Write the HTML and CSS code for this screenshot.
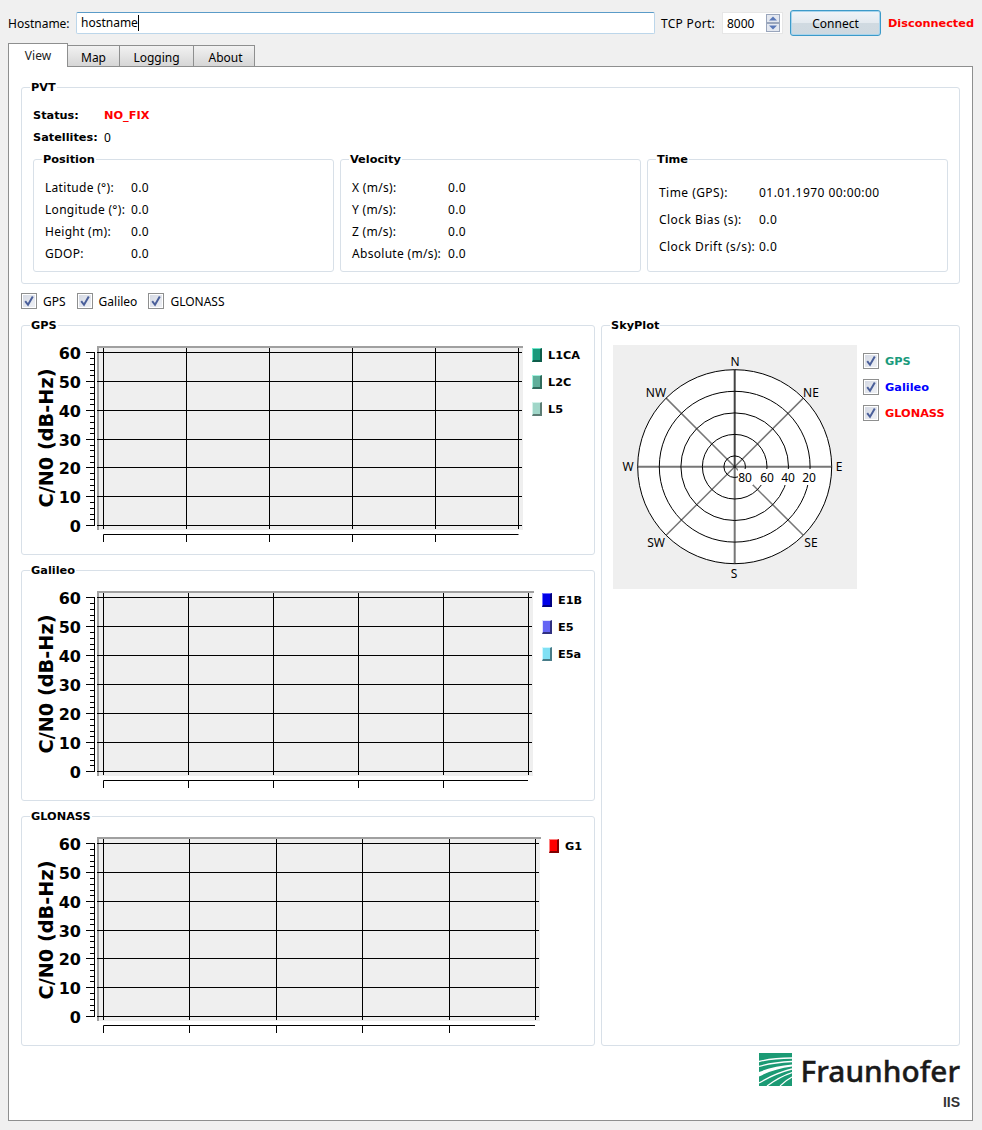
FILE: index.html
```html
<!DOCTYPE html>
<html lang="en">
<head>
<meta charset="utf-8">
<title>GNSS Monitor</title>
<link rel="stylesheet" href="styles.css">
</head>
<body>
<header class="topbar">
  <label class="host-label">Hostname:</label>
  <div class="text-input"><span>hostname</span><i class="caret"></i></div>
  <label class="port-label">TCP Port:</label>
  <div class="spin">
    <span>8000</span>
    <div class="spin-btns">
      <svg width="14" height="18" viewBox="0 0 14 18"><rect x="0.5" y="0.5" width="13" height="8" fill="#e4e8f0" stroke="#9aa6bc"/><rect x="0.5" y="9.5" width="13" height="8" fill="#e4e8f0" stroke="#9aa6bc"/><path d="M7 2.5l4 4H3z" fill="#5a78b8"/><path d="M7 15.5l4-4H3z" fill="#5a78b8"/></svg>
    </div>
  </div>
  <button class="connect">Connect</button>
  <strong class="conn-state">Disconnected</strong>
</header>

<nav class="tabs">
  <div class="tab active">View</div>
  <div class="tab tab-map">Map</div>
  <div class="tab tab-log">Logging</div>
  <div class="tab tab-about">About</div>
</nav>

<main class="pane">
  <fieldset class="group pvt">
    <legend>PVT</legend>
    <div class="status-grid">
      <b>Status:</b><b class="red">NO_FIX</b>
      <b>Satellites:</b><span>0</span>
    </div>
    <div class="pvt-cols">
      <fieldset class="group">
        <legend>Position</legend>
        <div class="kv kv-pos">
          <span>Latitude (°):</span><span>0.0</span>
          <span>Longitude (°):</span><span>0.0</span>
          <span>Height (m):</span><span>0.0</span>
          <span>GDOP:</span><span>0.0</span>
        </div>
      </fieldset>
      <fieldset class="group">
        <legend>Velocity</legend>
        <div class="kv kv-vel">
          <span>X (m/s):</span><span>0.0</span>
          <span>Y (m/s):</span><span>0.0</span>
          <span>Z (m/s):</span><span>0.0</span>
          <span>Absolute (m/s):</span><span>0.0</span>
        </div>
      </fieldset>
      <fieldset class="group">
        <legend>Time</legend>
        <div class="kv kv-time">
          <span>Time (GPS):</span><span>01.01.1970 00:00:00</span>
          <span>Clock Bias (s):</span><span>0.0</span>
          <span>Clock Drift (s/s):</span><span>0.0</span>
        </div>
      </fieldset>
    </div>
  </fieldset>

  <div class="checks">
    <div class="check"><svg class="cb" viewBox="0 0 16 16"><use href="#cb"/></svg><span>GPS</span></div>
    <div class="check"><svg class="cb" viewBox="0 0 16 16"><use href="#cb"/></svg><span>Galileo</span></div>
    <div class="check"><svg class="cb" viewBox="0 0 16 16"><use href="#cb"/></svg><span>GLONASS</span></div>
  </div>

  <div class="charts">
    <div class="chart-col">
      <fieldset class="group chart-group">
        <legend>GPS</legend>
        <div class="chart">
          <svg class="plot plot-gps" viewBox="22 332 510 222">
            <rect x="97" y="346" width="426" height="184" fill="#efefef"/>
            <path d="M97 347H523M98 346V530" stroke="#a0a0a0" stroke-width="2" fill="none"/>
            <path d="M97 352.5H522M97 381.5H522M97 410.5H522M97 439.5H522M97 467.5H522M97 496.5H522M97 525.5H522" stroke="#000"/>
            <path d="M103.5 348V529M186.5 348V529M269.5 348V529M352.5 348V529M435.5 348V529M518.5 348V529" stroke="#000"/>
            <path d="M103.500 542V534.500H518.500M186.500 534V542M269.500 534V542M352.500 534V542M435.500 534V542" stroke="#000" fill="none"/>
            <path d="M94.500 352V526M86 352.500H95M86 381.500H95M86 410.500H95M86 439.500H95M86 467.500H95M86 496.500H95M86 525.500H95M90 358.500H95M90 364.500H95M90 370.500H95M90 375.500H95M90 387.500H95M90 393.500H95M90 399.500H95M90 404.500H95M90 416.500H95M90 422.500H95M90 428.500H95M90 433.500H95M90 445.500H95M90 450.500H95M90 456.500H95M90 462.500H95M90 473.500H95M90 479.500H95M90 485.500H95M90 490.500H95M90 502.500H95M90 508.500H95M90 514.500H95M90 519.500H95" stroke="#000" fill="none"/>
            <g class="ticks"><text x="81" y="359">60</text><text x="81" y="388">50</text><text x="81" y="417">40</text><text x="81" y="446">30</text><text x="81" y="474">20</text><text x="81" y="503">10</text><text x="81" y="532">0</text></g>
            <text class="axis-title" transform="translate(53 438) rotate(-90)">C/N0 (dB-Hz)</text>
          </svg>
          <ul class="legend-list">
            <li><i class="sw sw-l1ca"></i><span>L1CA</span></li>
            <li><i class="sw sw-l2c"></i><span>L2C</span></li>
            <li><i class="sw sw-l5"></i><span>L5</span></li>
          </ul>
        </div>
      </fieldset>
      <fieldset class="group chart-group chart-group-tall">
        <legend>Galileo</legend>
        <div class="chart">
          <svg class="plot plot-gal" viewBox="22 577 520 222">
            <rect x="97" y="591" width="436" height="185" fill="#efefef"/>
            <path d="M97 592H534M98 591V776" stroke="#a0a0a0" stroke-width="2" fill="none"/>
            <path d="M97 597.500H532M97 626.500H532M97 655.500H532M97 684.500H532M97 713.500H532M97 742.500H532M97 771.500H532" stroke="#000"/>
            <path d="M103.500 593V775M188.500 593V775M273.500 593V775M358.500 593V775M443.500 593V775M528.500 593V775" stroke="#000"/>
            <path d="M103.500 788V780.500H528M188.500 780V788M273.500 780V788M358.500 780V788M443.500 780V788" stroke="#000" fill="none"/>
            <path d="M94.500 597V772M86 597.500H95M86 626.500H95M86 655.500H95M86 684.500H95M86 713.500H95M86 742.500H95M86 771.500H95M90 603.500H95M90 609.500H95M90 615.500H95M90 620.500H95M90 632.500H95M90 638.500H95M90 644.500H95M90 649.500H95M90 661.500H95M90 667.500H95M90 673.500H95M90 678.500H95M90 690.500H95M90 696.500H95M90 702.500H95M90 707.500H95M90 719.500H95M90 725.500H95M90 731.500H95M90 736.500H95M90 748.500H95M90 754.500H95M90 760.500H95M90 765.500H95" stroke="#000" fill="none"/>
            <g class="ticks"><text x="81" y="604">60</text><text x="81" y="633">50</text><text x="81" y="662">40</text><text x="81" y="691">30</text><text x="81" y="720">20</text><text x="81" y="749">10</text><text x="81" y="778">0</text></g>
            <text class="axis-title" transform="translate(53 684) rotate(-90)">C/N0 (dB-Hz)</text>
          </svg>
          <ul class="legend-list">
            <li><i class="sw sw-e1b"></i><span>E1B</span></li>
            <li><i class="sw sw-e5"></i><span>E5</span></li>
            <li><i class="sw sw-e5a"></i><span>E5a</span></li>
          </ul>
        </div>
      </fieldset>
      <fieldset class="group chart-group">
        <legend>GLONASS</legend>
        <div class="chart">
          <svg class="plot plot-glo" viewBox="22 823 527 221">
            <rect x="97" y="837" width="443" height="184" fill="#efefef"/>
            <path d="M97 838H541M98 837V1021" stroke="#a0a0a0" stroke-width="2" fill="none"/>
            <path d="M97 843.500H539M97 872.500H539M97 901.500H539M97 930.500H539M97 958.500H539M97 987.500H539M97 1016.500H539" stroke="#000"/>
            <path d="M103.500 839V1020M189.500 839V1020M276.500 839V1020M362.500 839V1020M449.500 839V1020M535.500 839V1020" stroke="#000"/>
            <path d="M103.500 1033V1025.500H535M189.500 1025V1033M276.500 1025V1033M362.500 1025V1033M449.500 1025V1033" stroke="#000" fill="none"/>
            <path d="M94.500 843V1017M86 843.500H95M86 872.500H95M86 901.500H95M86 930.500H95M86 958.500H95M86 987.500H95M86 1016.500H95M90 849.500H95M90 855.500H95M90 861.500H95M90 866.500H95M90 878.500H95M90 884.500H95M90 890.500H95M90 895.500H95M90 907.500H95M90 913.500H95M90 919.500H95M90 924.500H95M90 936.500H95M90 941.500H95M90 947.500H95M90 953.500H95M90 964.500H95M90 970.500H95M90 976.500H95M90 981.500H95M90 993.500H95M90 999.500H95M90 1005.500H95M90 1010.500H95" stroke="#000" fill="none"/>
            <g class="ticks"><text x="81" y="850">60</text><text x="81" y="879">50</text><text x="81" y="908">40</text><text x="81" y="937">30</text><text x="81" y="965">20</text><text x="81" y="994">10</text><text x="81" y="1023">0</text></g>
            <text class="axis-title" transform="translate(53 930) rotate(-90)">C/N0 (dB-Hz)</text>
          </svg>
          <ul class="legend-list">
            <li><i class="sw sw-g1"></i><span>G1</span></li>
          </ul>
        </div>
      </fieldset>
    </div>

    <fieldset class="group sky-group">
      <legend>SkyPlot</legend>
      <div class="sky-wrap">
        <svg class="sky" viewBox="613 345 244 244">
          <rect x="613" y="345" width="244" height="244" fill="#efefef"/>
          <circle cx="734.700" cy="466.700" r="97" fill="#fff"/>
          <g stroke="#777" stroke-width="1.500">
            <path d="M734.700 466.700L666.100 398.100M734.700 466.700L803.300 398.100M734.700 466.700L666.100 535.300M734.700 466.700L803.300 535.300"/>
            <path d="M637.700 466.700H831.700M734.700 466.700V563.700" stroke-width="2"/>
          </g>
          <path d="M734.700 369.700V466.700" stroke="#444" stroke-width="2"/>
          <g fill="none" stroke="#000" stroke-width="1">
            <circle cx="734.700" cy="466.700" r="97"/>
            <circle cx="734.700" cy="466.700" r="75.400"/>
            <circle cx="734.700" cy="466.700" r="53.800"/>
            <circle cx="734.700" cy="466.700" r="32.300"/>
            <circle cx="734.700" cy="466.700" r="10.800"/>
          </g>
          <circle cx="734.700" cy="466.700" r="1.500" fill="#222"/>
          <g fill="#fff"><rect x="738" y="469" width="15" height="16"/><rect x="759" y="469" width="16" height="16"/><rect x="780" y="469" width="16" height="16"/><rect x="802" y="469" width="15" height="16"/></g>
          <g class="sky-text">
            <text x="745" y="482">80</text><text x="767" y="482">60</text><text x="788" y="482">40</text><text x="809" y="482">20</text>
            <text x="735" y="366">N</text><text x="811" y="397">NE</text><text x="839" y="471">E</text><text x="811" y="547">SE</text>
            <text x="734" y="578">S</text><text x="656" y="547">SW</text><text x="628" y="471">W</text><text x="656" y="397">NW</text>
          </g>
        </svg>
        <div class="sky-checks">
          <div class="check"><svg class="cb" viewBox="0 0 16 16"><use href="#cb"/></svg><b class="c-gps">GPS</b></div>
          <div class="check"><svg class="cb" viewBox="0 0 16 16"><use href="#cb"/></svg><b class="c-gal">Galileo</b></div>
          <div class="check"><svg class="cb" viewBox="0 0 16 16"><use href="#cb"/></svg><b class="c-glo">GLONASS</b></div>
        </div>
      </div>
    </fieldset>
  </div>

  <footer class="logo">
    <div class="logo-main">
      <svg class="logo-mark" viewBox="0 0 33 33">
        <rect width="33" height="33" fill="#1b9a74"/>
        <path d="M0 8.500C10 6 21 5 33 5" stroke="#fff" stroke-width="1.300" fill="none"/>
        <path d="M0 13.500C10 10.500 21 9 33 8.500" stroke="#fff" stroke-width="1.300" fill="none"/>
        <path d="M0 19C10 15 21 12.500 33 11.500V13.500C21 15 10 18.500 0 23.500Z" fill="#fff"/>
        <path d="M0 30C10 24 21 19 33 16" stroke="#fff" stroke-width="1.300" fill="none"/>
        <path d="M8 33C16 27 24 22.500 33 19.500" stroke="#fff" stroke-width="1.300" fill="none"/>
        <path d="M21 33C25 29 29 26 33 24" stroke="#fff" stroke-width="1.200" fill="none"/>
      </svg>
      <span class="logo-name">Fraunhofer</span>
    </div>
    <span class="logo-iis">IIS</span>
  </footer>
</main>

<svg class="defs" width="0" height="0">
  <defs>
    <linearGradient id="cbg" x1="0" y1="0" x2="1" y2="1"><stop offset="0" stop-color="#d6dae4"/><stop offset="1" stop-color="#eef0f5"/></linearGradient>
    <g id="cb">
      <rect x="0.500" y="0.500" width="15" height="15" fill="#fff" stroke="#8e8f8f"/>
      <rect x="2" y="2" width="12" height="12" fill="url(#cbg)"/>
      <path d="M4.200 8.200L7 11.800L11.800 3.600" fill="none" stroke="#4a5f9a" stroke-width="2"/>
    </g>
  </defs>
</svg>
</body>
</html>
```
FILE: styles.css
```css
* { box-sizing: border-box; }
html, body { margin: 0; padding: 0; }
body {
  width: 982px;
  height: 1130px;
  overflow: hidden;
  background: #f0f0f0;
  color: #000;
  font: 12px/14px "Noto Sans", "Liberation Sans", sans-serif;
}
b, strong, legend {
  font-family: "DejaVu Sans", sans-serif;
  font-size: 11.3px;
  font-weight: 700;
}
.topbar {
  display: flex;
  align-items: center;
  height: 26px;
  margin-top: 10px;
  padding: 0 8px;
}
.host-label { width: 68px; padding-top: 2px; }
.text-input {
  display: flex;
  align-items: center;
  width: 579px;
  height: 22px;
  padding-left: 4px;
  background: #fff;
  border: 1px solid #bcd6ea;
  border-top-color: #5a9bc8;
  border-radius: 2px;
}
.caret { width: 1px; height: 16px; background: #000; }
.port-label { margin-left: 6px; width: 61px; padding-top: 2px; letter-spacing: 0.3px; white-space: nowrap; }
.spin {
  display: flex;
  align-items: center;
  justify-content: space-between;
  width: 61px;
  height: 22px;
  padding: 0 2px 0 4px;
  background: #fff;
  border: 1px solid #e6e6e6;
}
.spin > span { padding-top: 2px; }
.spin-btns { display: flex; }
.connect {
  width: 91px;
  height: 26px;
  margin-left: 7px;
  padding: 2px 0 0;
  color: #000;
  font: inherit;
  border: 1px solid #3c9ac9;
  border-radius: 3px;
  background: linear-gradient(#f0f4f8 0, #e4eaef 48%, #d0dae1 52%, #cfd9e0 100%);
  box-shadow: inset 0 0 0 1px #a8d4ec;
}
.conn-state { margin-left: 7px; color: #f00; white-space: nowrap; padding-top: 1px; }
.red { color: #f00; }

.tabs {
  display: flex;
  align-items: flex-end;
  height: 24px;
  margin: 7px 0 -1px 8px;
  position: relative;
  z-index: 1;
}
.tab {
  height: 22px;
  text-align: center;
  line-height: 24px;
  border: 1px solid #8e8f8f;
  border-left-width: 0;
  background: linear-gradient(#f2f2f2, #d6d6d6);
}
.tab.active {
  width: 60px;
  height: 24px;
  line-height: 24px;
  border-left-width: 1px;
  border-bottom: 0;
  background: #fff;
  color: #222;
}
.tab-map { width: 52px; }
.tab-log { width: 74px; }
.tab-about { width: 61px; padding-left: 3px; }

.pane {
  display: flex;
  flex-direction: column;
  width: 965px;
  height: 1055px;
  margin-left: 8px;
  padding: 13px 12px 0;
  background: #fff;
  border: 1px solid #8e8f8f;
}
.group {
  min-width: 0;
  margin: 0;
  padding: 0;
  border: 1px solid #d8e0e8;
  border-radius: 3px;
}
.group > legend {
  height: 14px;
  margin-left: 8px;
  padding: 0 1px;
  line-height: 15px;
}
.pvt > legend, .pvt-cols .group > legend { margin-left: -3px; }
.pvt { height: 204px; padding: 0 11px; }
.status-grid {
  display: grid;
  grid-template-columns: 71px auto;
  grid-auto-rows: 22px;
  align-items: center;
  justify-content: start;
  margin-top: 10px;
}
.status-grid > * { padding-top: 2px; }
.pvt-cols {
  display: grid;
  grid-template-columns: repeat(3, 301px);
  gap: 6px;
  margin-top: 4px;
}
.pvt-cols .group { height: 120px; padding: 0 11px; }
.kv {
  display: grid;
  grid-auto-rows: 22px;
  align-items: center;
  margin-top: 10px;
  letter-spacing: 0.3px;
  white-space: nowrap;
}
.kv > span { padding-top: 2px; }
.kv-pos { grid-template-columns: 86px auto; }
.kv-vel { grid-template-columns: 96px auto; }
.kv-time { grid-template-columns: 100px auto; grid-auto-rows: 27px; margin-top: 12px; letter-spacing: 0.45px; }

.checks {
  display: flex;
  gap: 11px;
  height: 16px;
  margin-top: 9px;
}
.check { display: flex; align-items: center; gap: 6px; }
.check > span, .check > b { padding-top: 2px; }
.cb { display: block; width: 16px; height: 16px; flex: none; }

.charts {
  display: grid;
  grid-template-columns: 574px 359px;
  gap: 6px;
  margin-top: 9px;
}
.chart-col { display: flex; flex-direction: column; gap: 8px; }
.chart-group { height: 237px; }
.chart-group-tall { height: 238px; }
.chart { display: flex; }
.plot { display: block; height: 222px; flex: none; }
.plot-gps { width: 510px; height: 222px; }
.plot-gal { width: 520px; }
.plot-glo { width: 527px; height: 221px; }
.ticks text {
  font: 700 16px "DejaVu Sans", sans-serif;
  text-anchor: end;
}
.axis-title {
  font: 700 19.300px "DejaVu Sans", sans-serif;
  text-anchor: middle;
}
.legend-list {
  list-style: none;
  margin: 0;
  padding: 16px 0 0;
  font-family: "DejaVu Sans", sans-serif;
  font-size: 11.3px;
  font-weight: 700;
}
.legend-list li {
  display: flex;
  align-items: flex-start;
  gap: 6px;
  height: 14px;
  margin-bottom: 13px;
  line-height: 15px;
}
.sw {
  display: block;
  width: 10px;
  height: 14px;
  border-style: solid;
  border-width: 1px 2px 2px 1px;
}
.sw-l1ca { background: #1a9a7c; border-color: #6fe8cc #0e5c4a #0e5c4a #6fe8cc; }
.sw-l2c { background: #5fae9a; border-color: #a4f4e0 #2f6a5c #2f6a5c #a4f4e0; }
.sw-l5 { background: #a0d6c8; border-color: #d4f2ea #5c7c74 #5c7c74 #d4f2ea; }
.sw-e1b { background: #0000e8; border-color: #7070ff #000080 #000080 #7070ff; }
.sw-e5 { background: #6464f4; border-color: #e0e0ff #303080 #303080 #e0e0ff; }
.sw-e5a { background: #80e0f4; border-color: #d0f8ff #487c88 #487c88 #d0f8ff; }
.sw-g1 { background: #f00; border-color: #ff8080 #800000 #800000 #ff8080; }

.sky-group { height: 728px; }
.sky-wrap { display: flex; gap: 6px; padding: 13px 0 0 11px; }
.sky { display: block; width: 244px; height: 244px; flex: none; }
.sky-text text {
  font: 12px "Noto Sans", sans-serif;
  text-anchor: middle;
}
.sky-checks {
  display: flex;
  flex-direction: column;
  gap: 10px;
  padding-top: 8px;
}
.c-gps { color: #1a9a7c; }
.c-gal { color: #00f; }
.c-glo { color: #f00; }

.logo {
  display: flex;
  flex-direction: column;
  align-items: flex-end;
  margin-top: 7px;
}
.logo-main { display: flex; align-items: flex-end; gap: 9px; height: 33px; }
.logo-mark { display: block; width: 33px; height: 33px; }
.logo-name {
  font: 500 29.800px/34px "Noto Sans", sans-serif;
  -webkit-text-stroke: 0.4px #1a1a1a;
  color: #1a1a1a;
  margin-bottom: -2px;
}
.logo-iis {
  margin-top: 8px;
  font: 700 14px/16px "Liberation Sans", sans-serif;
  color: #333;
}
.defs { position: absolute; }
```
